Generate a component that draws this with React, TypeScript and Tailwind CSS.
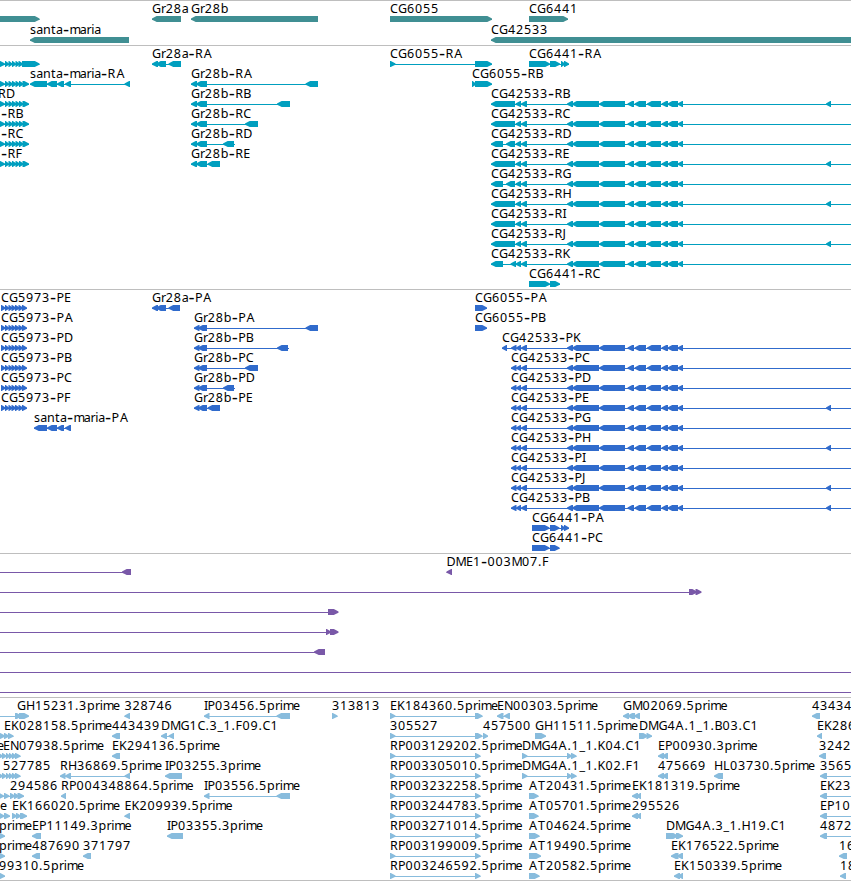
import React from "react";

type Span = [number, number];
type Dir = "l" | "r";
interface Feature {
  row: number;
  dir: Dir;
  blocks: Span[];
  label?: string;
  labelX?: number;
  line?: Span;
}

const ADVANCE: Record<string, number> = {
  A: 9, C: 8, D: 9, E: 7, F: 7, G: 9, H: 9, I: 3.5, J: 4, K: 8, L: 7, M: 10.5, N: 9, P: 7.5, R: 8, T: 8, B: 8,
  a: 6.8, b: 8, e: 7, i: 3, m: 10.4, n: 8, p: 8, r: 4.7, s: 6.3, t: 5, "-": 6.5, ".": 4, _: 6,
};

function glyphPositions(text: string, start: number) {
  let x = start;
  return [...text].map((ch, i) => {
    if (ch === "A" && (text[i - 1] === "R" || text[i - 1] === "P")) x += 0.8;
    const at = x;
    x += ADVANCE[ch] ?? 8;
    return Number(at.toFixed(1));
  });
}

function Label({ text, x, y }: { text: string; x: number; y: number }) {
  const xs = glyphPositions(text, x);
  let offset = 0;
  return (
    <text className="fill-black text-[12.5px]" y={y}>
      {text.split(/(-)/).map((part, i) => {
        const own = xs.slice(offset, offset + part.length);
        offset += part.length;
        if (!part) return null;
        return part === "-" ? (
          <tspan key={i} x={own[0]} y={y + 0.7} className="font-['DejaVu_Sans',sans-serif] text-[17px]">
            {part}
          </tspan>
        ) : (
          <tspan key={i} x={own.join(" ")} y={y}>
            {part}
          </tspan>
        );
      })}
    </text>
  );
}

function Block({ span: [a, b], dir, y }: { span: Span; dir: Dir; y: number }) {
  const head = Math.min(5.5, b - a);
  const tip = dir === "l" ? a : b;
  const tail = dir === "l" ? b : a;
  const s = dir === "l" ? 1 : -1;
  const points = [
    [tip, y + 2.5],
    [tip + s * head * 0.5, y + 1],
    [tip + s * head * 0.85, y],
    [tail, y],
    [tail, y + 6],
    [tip + s * head * 0.85, y + 6],
    [tip + s * head * 0.5, y + 5],
    [tip, y + 3.7],
  ]
    .map((p) => p.join(","))
    .join(" ");
  return <polygon points={points} />;
}

function Track({ features, pitch = 20, color, size }: { features: Feature[]; pitch?: number; color: string; size: string }) {
  return (
    <section className={`w-full overflow-hidden border-t border-[#bebebe] ${size}`}>
      <svg className={`block h-full w-full ${color}`}>
        {features.map((f, i) => {
          const top = f.row * pitch + 15;
          const start = f.blocks.length ? f.blocks[0][0] : 0;
          const end = f.blocks.length ? f.blocks[f.blocks.length - 1][1] : 0;
          const line = f.line ?? [start, end];
          return (
            <g key={i} fill="currentColor">
              {line[1] > line[0] && <rect x={line[0]} y={top + 3} width={line[1] - line[0]} height={1} />}
              {f.blocks.map((b, j) => (
                <Block key={j} span={b} dir={f.dir} y={top} />
              ))}
            </g>
          );
        })}
        {features.map((f, i) =>
          f.label ? <Label key={i} text={f.label} x={f.labelX ?? f.blocks[0][0]} y={f.row * pitch + 12} /> : null,
        )}
      </svg>
    </section>
  );
}

const f = (row: number, dir: Dir, label: string, blocks: Span[], line?: Span, labelX?: number): Feature => ({
  row, dir, label, blocks, line, labelX,
});

const genes: Feature[] = [
  f(0, "r", "", [[-5, 39.5]]),
  f(0, "l", "Gr28a", [[152, 181]]),
  f(0, "l", "Gr28b", [[191, 318]]),
  f(0, "r", "CG6055", [[390, 492]]),
  f(0, "r", "CG6441", [[529, 568]]),
  f(1, "l", "santa-maria", [[30, 129]]),
  f(1, "l", "CG42533", [[491, 860]]),
];

const sharedExons: Span[] = [
  [567, 573], [572, 599], [599, 625], [627.5, 634], [634.5, 646], [647, 661], [661.5, 668], [667.5, 678], [677.5, 683],
];
const farExon: Span[] = [[826, 831]];
const farLine = (x: number): Span => [x, 860];

const cg42533 = (row: number, label: string, lead: Span[], far: boolean) =>
  f(row, "l", label, [...lead, ...sharedExons, ...(far ? farExon : [])], farLine(lead[0][0]));

const leadLong: Span[] = [[491, 515], [515.5, 521], [521, 527]];
const leadSplit: Span[] = [[491, 503], [506, 515], [515.5, 521], [521, 527]];
const leadShort: Span[] = [[491, 503], [510.5, 516], [515.5, 521], [521, 527]];
const codingLead: Span[] = [[511, 516.5], [516, 521], [521, 527]];

const cg5973Exons: Span[] = [[-3, 5], [5, 9], [8.5, 13], [12, 16.5], [15.5, 20], [19, 23.5], [22.5, 29]];
const cg5973Coding: Span[] = [[1, 5.5], [5, 9], [8.5, 12.5], [11.5, 16], [15, 19.5], [18.5, 23], [22, 27]];
const gr28bStart: Span[] = [[191, 197], [196, 207]];
const gr28bCoding: Span[] = [[194, 199.5], [198, 207]];

const transcripts: Feature[] = [
  f(0, "r", "", [[-3, 5], [5, 9], [8.5, 12.5], [12, 16], [15.5, 19.5], [18.5, 23], [22, 39.5]]),
  f(1, "r", "", cg5973Exons),
  f(2, "r", "RD", cg5973Exons, undefined, -2),
  f(3, "r", "-RB", cg5973Exons, undefined, 1),
  f(4, "r", "-RC", cg5973Exons, undefined, 1),
  f(5, "r", "-RF", cg5973Exons, undefined, 1),
  f(1, "l", "santa-maria-RA", [[30, 47], [47, 57], [57, 64], [65, 71], [124.5, 130]]),
  f(0, "l", "Gr28a-RA", [[152, 158], [156, 166], [168.5, 181]]),
  f(1, "l", "Gr28b-RA", [...gr28bStart, [305.5, 318]]),
  f(2, "l", "Gr28b-RB", [...gr28bStart, [277, 290]]),
  f(3, "l", "Gr28b-RC", [...gr28bStart, [245, 258]]),
  f(4, "l", "Gr28b-RD", [...gr28bStart, [223, 234]], [191, 235]),
  f(5, "l", "Gr28b-RE", [...gr28bStart, [207.5, 220]]),
  f(0, "r", "CG6055-RA", [[390, 395.5], [475, 492]]),
  f(1, "r", "CG6055-RB", [[472, 476], [475, 492]]),
  f(0, "r", "CG6441-RA", [[529, 550], [550, 560], [561, 565], [564, 569]]),
  cg42533(2, "CG42533-RB", leadLong, true),
  cg42533(3, "CG42533-RC", leadLong, false),
  cg42533(4, "CG42533-RD", leadSplit, false),
  cg42533(5, "CG42533-RE", leadLong, true),
  cg42533(6, "CG42533-RG", leadSplit, false),
  cg42533(7, "CG42533-RH", leadLong, true),
  cg42533(8, "CG42533-RI", leadLong, false),
  cg42533(9, "CG42533-RJ", leadLong, true),
  cg42533(10, "CG42533-RK", leadShort, false),
  f(11, "r", "CG6441-RC", [[529, 550], [550, 560]]),
];

const proteins: Feature[] = [
  ...["PE", "PA", "PD", "PB", "PC", "PF"].map((s, i) => f(i, "r", `CG5973-${s}`, cg5973Coding)),
  f(6, "l", "santa-maria-PA", [[34, 47], [47, 57], [57, 64], [65, 71]]),
  f(0, "l", "Gr28a-PA", [[152, 158], [156, 166], [168.5, 180]]),
  f(1, "l", "Gr28b-PA", [...gr28bCoding, [305.5, 318]]),
  f(2, "l", "Gr28b-PB", [...gr28bCoding, [277, 288]], [194, 289]),
  f(3, "l", "Gr28b-PC", [...gr28bCoding, [245, 258]]),
  f(4, "l", "Gr28b-PD", [...gr28bCoding, [223, 234]], [194, 235]),
  f(5, "l", "Gr28b-PE", [...gr28bCoding, [207.5, 220]]),
  f(0, "r", "CG6055-PA", [[475, 487]]),
  f(1, "r", "CG6055-PB", [[475, 487]]),
  cg42533(2, "CG42533-PK", [[502, 507], ...codingLead], false),
  cg42533(3, "CG42533-PC", codingLead, false),
  cg42533(4, "CG42533-PD", codingLead, false),
  cg42533(5, "CG42533-PE", codingLead, true),
  cg42533(6, "CG42533-PG", codingLead, false),
  cg42533(7, "CG42533-PH", codingLead, true),
  cg42533(8, "CG42533-PI", codingLead, false),
  cg42533(9, "CG42533-PJ", codingLead, true),
  cg42533(10, "CG42533-PB", codingLead, true),
  f(11, "r", "CG6441-PA", [[532, 549.5], [550, 559.5], [561, 565], [564, 569]]),
  f(12, "r", "CG6441-PC", [[532, 549.5], [550, 559.5]]),
];

const clones: Feature[] = [
  f(0, "l", "", [[122, 131]], [0, 131]),
  f(0, "l", "DME1-003M07.F", [[446.5, 452]]),
  f(1, "r", "", [[689, 697], [695.5, 701.5]], [0, 701]),
  f(2, "r", "", [[328, 338.5]], [0, 338]),
  f(3, "r", "", [[326, 331], [330, 338.5]], [0, 338]),
  f(4, "l", "", [[314, 325]], [0, 325]),
  f(5, "r", "", [], [0, 860]),
  f(6, "r", "", [], [0, 860]),
];

const rpBlocks: Span[] = [[390, 395.5], [475, 480.5]];
const ekBlocks: Span[] = [[390, 395.5], [475, 482.5]];
const dmgBlocks: Span[] = [[522, 527.5], [567, 572], [571, 576.5]];
const ipBlocks: Span[] = [[204, 209.5], [276.5, 290]];
const longRun: Span[] = [[-2, 3], [2, 6.5], [6, 10], [9, 13], [12, 16.5], [15, 20.5]];

const ests: Feature[] = [
  f(0, "r", "GH15231.3prime", [[15, 21.5], [19, 29]], [0, 28], 17),
  f(0, "l", "328746", [[124.5, 130]]),
  f(0, "l", "IP03456.5prime", ipBlocks),
  f(0, "r", "313813", [[332, 337.5]]),
  f(0, "r", "EK184360.5prime", ekBlocks),
  f(0, "l", "EN00303.5prime", [[497, 503.5], [504, 510]]),
  f(0, "l", "GM02069.5prime", [[623, 629], [627.5, 635], [634, 640]]),
  f(0, "l", "43434", [[812, 820]]),
  f(1, "r", "EK028158.5prime", [[-3, 5], [4, 9], [8, 13.5]], undefined, 4),
  f(1, "l", "443439", [[112, 120]]),
  f(1, "l", "DMG1C.3_1.F09.C1", [[161, 167], [168.5, 174]]),
  f(1, "r", "305527", ekBlocks),
  f(1, "r", "457500", [[483, 488]]),
  f(1, "r", "GH11511.5prime", [[535, 546]]),
  f(1, "r", "DMG4A.1_1.B03.C1", [[639, 648], [646.5, 652]]),
  f(1, "l", "EK286", [[817, 822]]),
  f(2, "r", "e", longRun, undefined, -3),
  f(2, "r", "EN07938.5prime", [], undefined, 3),
  f(2, "l", "EK294136.5prime", [[112, 120]]),
  f(2, "r", "RP003129202.5prime", rpBlocks),
  f(2, "r", "DMG4A.1_1.K04.C1", dmgBlocks),
  f(2, "l", "EP00930.3prime", [[658, 664], [662, 668]]),
  f(2, "l", "3242", [[819, 826]]),
  f(3, "r", "527785", longRun, undefined, 3),
  f(3, "l", "RH36869.5prime", [[60, 65.5], [65, 71], [124.5, 130]]),
  f(3, "l", "IP03255.3prime", [[165, 182]]),
  f(3, "r", "RP003305010.5prime", rpBlocks),
  f(3, "r", "DMG4A.1_1.K02.F1", dmgBlocks),
  f(3, "l", "475669", [[658, 664], [662, 668]]),
  f(3, "l", "HL03730.5prime", [[714, 723]]),
  f(3, "l", "3565", [[820, 827]], [820, 860]),
  f(4, "r", "294586", [[-3, 4], [4, 9.5], [10, 15], [14, 19], [17.5, 24]], undefined, 10),
  f(4, "l", "RP004348864.5prime", [[61, 66]]),
  f(4, "l", "IP03556.5prime", ipBlocks),
  f(4, "r", "RP003232258.5prime", rpBlocks),
  f(4, "r", "AT20431.5prime", [[529, 538.5]]),
  f(4, "l", "EK181319.5prime", [[632, 638], [636, 641]]),
  f(4, "l", "EK23", [[820, 827]], [820, 860]),
  f(5, "r", "e", [[-3, 4.5], [4, 10]], undefined, 0),
  f(5, "r", "EK166020.5prime", [[12, 17], [16, 21], [20, 27]]),
  f(5, "l", "EK209939.5prime", [[124.5, 130]]),
  f(5, "r", "RP003244783.5prime", rpBlocks),
  f(5, "r", "AT05701.5prime", [[529, 538.5]]),
  f(5, "l", "295526", [[632, 638], [636, 641]]),
  f(5, "l", "EP10", [[820, 827]], [820, 860]),
  f(6, "r", "prime", [[-3, 5]], undefined, -1),
  f(6, "l", "EP11149.3prime", [[32, 41]]),
  f(6, "l", "IP03355.3prime", [[167, 183]]),
  f(6, "r", "RP003271014.5prime", rpBlocks),
  f(6, "r", "AT04624.5prime", [[529, 539.5]]),
  f(6, "r", "DMG4A.3_1.H19.C1", [[666, 678], [676, 683]]),
  f(6, "l", "4872", [[820, 827]], [820, 860]),
  f(7, "r", "prime", [[-3, 5]], undefined, -1),
  f(7, "l", "487690", [[32, 40]]),
  f(7, "l", "371797", [[83, 91]]),
  f(7, "r", "RP003199009.5prime", rpBlocks),
  f(7, "r", "AT19490.5prime", [[529, 541]]),
  f(7, "l", "EK176522.5prime", [[671, 678.5], [677, 683]]),
  f(7, "l", "16", [[839, 847]]),
  f(8, "r", "99310.5prime", [[-3, 5]], undefined, -1),
  f(8, "r", "RP003246592.5prime", rpBlocks),
  f(8, "r", "AT20582.5prime", [[529, 539.5]]),
  f(8, "l", "EK150339.5prime", [[674, 680], [678, 683]]),
  f(8, "l", "18", [[840, 846]]),
];

export default function App() {
  return (
    <main className="flex h-[881px] w-[851px] flex-col overflow-hidden border-b border-[#bebebe] bg-white font-['Noto_Sans',sans-serif]">
      <Track features={genes} pitch={21} color="text-[#408f93]" size="h-[45px]" />
      <Track features={transcripts} color="text-[#009fbf]" size="h-[244px]" />
      <Track features={proteins} color="text-[#306bcc]" size="h-[264px]" />
      <Track features={clones} color="text-[#7958a8]" size="h-[144px]" />
      <Track features={ests} color="text-[#88bcdd]" size="h-[183px]" />
    </main>
  );
}
